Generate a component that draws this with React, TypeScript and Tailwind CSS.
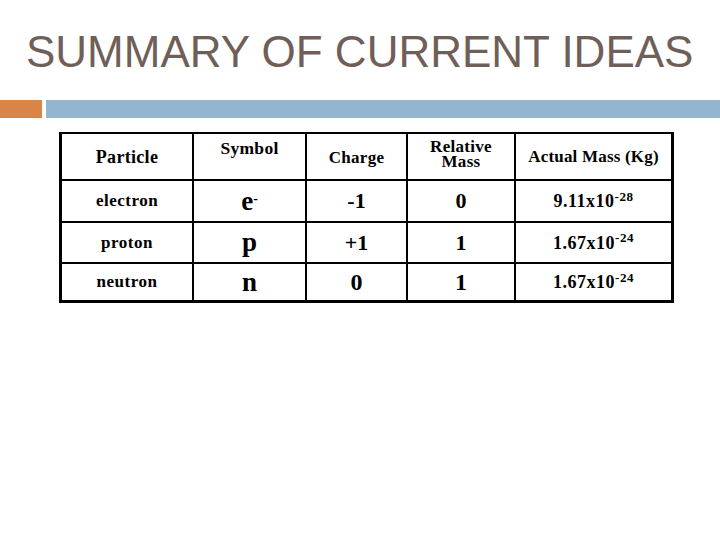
const rows = [
  { name: "electron", symbol: "e", symSup: "-", charge: "-1", rel: "0", mass: "9.11x10", exp: "-28", h: "h-[40px]", big: "text-[22px]" },
  { name: "proton", symbol: "p", symSup: "", charge: "+1", rel: "1", mass: "1.67x10", exp: "-24", h: "h-[39px]", big: "text-[22px]" },
  { name: "neutron", symbol: "n", symSup: "", charge: "0", rel: "1", mass: "1.67x10", exp: "-24", h: "h-[36px]", big: "text-[24px]" },
];

function Cell({ children, className = "" }: { children: React.ReactNode; className?: string }) {
  return <div className={`flex justify-center bg-white text-black ${className}`}>{children}</div>;
}

export default function App() {
  return (
    <div className="h-[540px] w-[720px] overflow-hidden bg-white">
      <h1 className="pl-[26px] pt-[30px] font-['Liberation_Sans',Arial,sans-serif] text-[44px] font-normal leading-[44px] text-[#705f58]">
        SUMMARY OF CURRENT IDEAS
      </h1>

      <div className="mt-[26px] flex h-[18px] gap-[4px]">
        <div className="w-[42px] bg-[#db8447]" />
        <div className="flex-1 bg-[#94b5d0]" />
      </div>

      <div className="ml-[59px] mt-[14px] w-[615px] border-x-[3px] border-b-[3px] border-t-2 border-black bg-black font-['Liberation_Serif','Times_New_Roman',serif] font-bold">
        <div className="grid grid-cols-[130px_111px_99px_106px_155px] gap-[2px]">
          <Cell className="h-[45px] items-center pt-[2px] text-[18px] tracking-[0.3px]">Particle</Cell>
          <Cell className="h-[45px] items-start pt-[1px] text-[17.5px] tracking-[0.3px]">Symbol</Cell>
          <Cell className="h-[45px] items-center pt-[2px] text-[17px] tracking-[0.3px]">Charge</Cell>
          <Cell className="h-[45px] items-start pt-[5px] text-center text-[17px] leading-[15px] tracking-[0.3px]">
            <span>
              Relative
              <br />
              Mass
            </span>
          </Cell>
          <Cell className="h-[45px] items-center text-[17px] tracking-[0.2px]">Actual Mass (Kg)</Cell>

          {rows.map((r) => (
            <Row key={r.name} r={r} />
          ))}
        </div>
      </div>
    </div>
  );
}

function Row({ r }: { r: (typeof rows)[number] }) {
  return (
    <>
      <Cell className={`${r.h} items-center text-[17px] tracking-[0.5px]`}>{r.name}</Cell>
      <Cell className={`${r.h} items-center text-[27px] leading-none`}>
        <span>
          {r.symbol}
          {r.symSup ? <sup className="text-[14px]">{r.symSup}</sup> : null}
        </span>
      </Cell>
      <Cell className={`${r.h} items-center ${r.big} leading-none`}>{r.charge}</Cell>
      <Cell className={`${r.h} items-center ${r.big} leading-none`}>{r.rel}</Cell>
      <Cell className={`${r.h} items-center text-[18px] leading-none tracking-[0.5px]`}>
        <span>
          {r.mass}
          <sup className="text-[13px]">{r.exp}</sup>
        </span>
      </Cell>
    </>
  );
}
